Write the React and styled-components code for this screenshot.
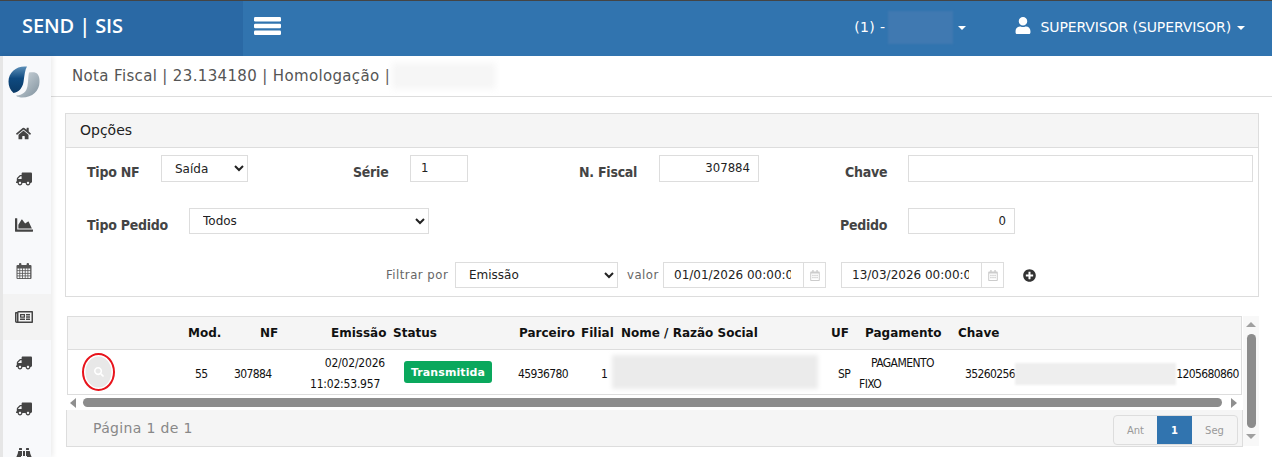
import React from "react";
import styled, { createGlobalStyle } from "styled-components";
import { FaHome, FaTruck, FaChartArea, FaRegNewspaper, FaBinoculars, FaUser, FaSearch, FaPlusCircle, FaRegCalendarAlt } from "react-icons/fa";

const Global = createGlobalStyle`
  html, body { margin: 0; padding: 0; background: #fff; height: 457px; overflow: hidden; }
  body { font-family: "DejaVu Sans", Verdana, sans-serif; color: #333; }
  * { box-sizing: border-box; }
`;

const Page = styled.div`width: 1272px; height: 457px; overflow: hidden; display: flex; flex-direction: column;`;
const Header = styled.header`
  height: 56px; flex: none; display: flex; background: #3174af; border-top: 1px solid #444;
`;
const Brand = styled.div`
  width: 243px; background: #2a69a5; color: #fff; padding-left: 22px; display: flex; align-items: center;
  padding-bottom: 7px; font: 600 20px "Open Sans", sans-serif; letter-spacing: -0.1px; white-space: pre;
`;
const Burger = styled.div`
  margin-left: 11px; width: 27px; color: #fff; display: flex; align-items: center; padding-bottom: 6px;
  svg { display: block; }
`;
const TopRight = styled.div`
  margin-left: auto; display: flex; align-items: center; color: #fff; font-size: 14px; padding-bottom: 3px;
`;
const Blurred = styled.div`
  width: ${p => p.$w}px; height: ${p => p.$h}px; background: ${p => p.$c}; filter: blur(${p => p.$b ?? 3}px); flex: none;
  margin-left: ${p => p.$ml ?? 0}px;
`;
const Caret = styled.span`
  display: inline-block; border-left: 4px solid transparent; border-right: 4px solid transparent; border-top: 4px solid #fff;
  margin: 2px ${p => p.$mr}px 0 ${p => p.$ml}px;
`;
const TopText = styled.span`margin-left: ${p => p.$ml}px; white-space: nowrap; letter-spacing: ${p => p.$ls ?? 0}px;`;
const UserIcon = styled(FaUser)`width: 16px; height: 17px; margin-top: -3px;`;

const Body = styled.div`flex: 1; display: flex; min-height: 0;`;
const Sidebar = styled.nav`
  width: 51px; flex: none; background: #f8f9fb; border-left: 3px solid #e6e6e6;
  box-shadow: 2px 0 5px rgba(0,0,0,.08); z-index: 1; overflow: hidden;
`;
const LogoBox = styled.div`height: 54px; padding: 10px 0 0 5px; svg { display: block; }`;
const NavItem = styled.div`
  height: 46px; display: flex; align-items: center; justify-content: center; color: #444;
  background: ${p => (p.$active ? "#f3f3f3" : "transparent")}; padding-right: 7px; flex: none;
  svg { width: ${p => p.$s ?? 16}px; height: ${p => p.$s ?? 16}px; }
`;
const FlipTruck = styled(FaTruck)`transform: scaleX(-1);`;

const Main = styled.main`flex: 1; min-width: 0;`;
const TitleBar = styled.div`
  height: 41px; border-bottom: 1px solid #ddd; padding-left: 21px; display: flex; align-items: center;
  font-size: 15px; color: #555; letter-spacing: .35px; white-space: nowrap;
`;
const Panel = styled.section`
  margin: 16px 13px 0 14px; height: 184px; border: 1px solid #ddd; display: flex; flex-direction: column;
`;
const PanelHead = styled.div`
  height: 34px; flex: none; background: #f5f5f5; border-bottom: 1px solid #ddd; padding: 0 0 2px 14px;
  display: flex; align-items: center; font-size: 14px; color: #222;
`;
const FormRow = styled.div`
  display: flex; align-items: flex-start; margin-top: ${p => p.$mt}px; padding-left: ${p => p.$pl}px; flex: none;
`;
const FieldLabel = styled.label`
  width: ${p => p.$w}px; padding-left: ${p => p.$pl ?? 0}px; flex: none; font: bold 14px "DejaVu Sans Condensed", "DejaVu Sans", sans-serif; font-stretch: condensed;
  color: #444; padding-top: 9px; white-space: nowrap; letter-spacing: -.25px;
`;
const Select = styled.select`
  width: ${p => p.$w}px; height: ${p => p.$h}px; flex: none; border: 1px solid #ddd; background: #fff; border-radius: 0;
  font: 12px "DejaVu Sans", sans-serif; color: #222; padding: 0 0 0 9px; margin: 0; outline: none;
`;
const TextInput = styled.input`
  width: ${p => p.$w}px; height: ${p => p.$h}px; flex: none; border: 1px solid #ddd; background: #fff; border-radius: 0;
  font: 13px "DejaVu Sans Condensed", "DejaVu Sans", sans-serif; font-stretch: condensed; color: #222;
  padding: 0 8px 2px 10px; margin: 0; text-align: ${p => p.$align || "left"}; outline: none;
`;
const FilterLabel = styled.span`
  width: ${p => p.$w}px; padding-left: ${p => p.$pl ?? 0}px; flex: none; font: 13px "DejaVu Sans Condensed", "DejaVu Sans", sans-serif; font-stretch: condensed; color: #666;
  padding-top: 5px; letter-spacing: .5px; white-space: nowrap;
`;
const DateGroup = styled.div`
  width: 163px; height: 26px; flex: none; display: flex; border: 1px solid #ddd; margin-right: 15px;
`;
const DateInput = styled.input`
  width: 139px; border: 0; padding: 0 12px 0 10px; font: 12px "DejaVu Sans", sans-serif; color: #222; outline: none; background: #fff; margin: 0;
`;
const DateAddon = styled.div`
  flex: 1; border-left: 1px solid #ddd; display: flex; align-items: center; justify-content: center; color: #ccc;
  svg { width: 10px; height: 11px; }
`;
const AddBtn = styled.div`
  margin: 7px 0 0 4px; color: #333; svg { display: block; width: 13px; height: 13px; }
`;

const TableArea = styled.section`
  display: flex; margin: 19px 0 0 15px; width: 1193px; align-items: flex-start;
`;
const TableCol = styled.div`width: 1177px; flex: none;`;
const TableBox = styled.div`
  margin-left: 1px; width: 1175px; border: 1px solid #ddd;
`;
const HeadRow = styled.div`
  height: 33px; background: #f5f5f5; border-bottom: 1px solid #ddd; display: flex; align-items: center; padding-left: 120px;
  font: bold 12px "DejaVu Sans", sans-serif; color: #111; white-space: nowrap;
`;
const DataRow = styled.div`
  height: 44px; display: flex; align-items: center; padding-left: 14px;
  font: 12px "DejaVu Sans Condensed", "DejaVu Sans", sans-serif; font-stretch: condensed; color: #111; white-space: nowrap; letter-spacing: -.6px;
`;
const Cell = styled.div`width: ${p => p.$w}px; flex: none; display: flex; align-items: center;`;
const TextCell = styled(Cell)`padding-top: 3px;`;
const MultiLine = styled.div`
  width: ${p => p.$w}px; margin-right: ${p => p.$mr}px; flex: none; line-height: 21px; margin-top: 4px; letter-spacing: ${p => p.$ls}px;
`;
const LineEnd = styled.div`text-align: right;`;
const SearchRing = styled.div`
  width: 33px; height: 38px; border: 2px solid #e8141c; border-radius: 50%; background: #e8e8e8;
  display: flex; align-items: center; justify-content: center; color: #fff; box-shadow: inset 0 0 0 1.5px #fff;
  svg { width: 10px; height: 10px; }
`;
const Badge = styled.span`
  width: 88px; height: 22px; background: #0aa85d; color: #fff; border-radius: 3px; display: flex; align-items: center; justify-content: center;
  font: bold 11px "DejaVu Sans", sans-serif; letter-spacing: .1px;
`;
const HScroll = styled.div`
  height: 15px; margin-left: 1px; width: 1176px; display: flex; align-items: center; padding-left: 3px;
`;
const Arrow = styled.span`
  flex: none; width: 0; height: 0; display: block;
  ${p => p.$dir === "left" && "border-top: 5px solid transparent; border-bottom: 5px solid transparent; border-right: 6px solid #8f8f8f;"}
  ${p => p.$dir === "right" && "border-top: 5px solid transparent; border-bottom: 5px solid transparent; border-left: 6px solid #8f8f8f;"}
  ${p => p.$dir === "up" && "border-left: 5px solid transparent; border-right: 5px solid transparent; border-bottom: 5px solid #a0a0a0;"}
  ${p => p.$dir === "down" && "border-left: 5px solid transparent; border-right: 5px solid transparent; border-top: 5px solid #a0a0a0;"}
`;
const HThumb = styled.div`width: 1139px; height: 9px; margin: 0 9px 0 7px; border-radius: 5px; background: #8c8c8c; flex: none;`;
const Pager = styled.div`
  height: 37px; background: #f5f5f5; border: 1px solid #ddd; border-top: 0; display: flex; align-items: flex-start; justify-content: space-between;
  padding: 5px 4px 0 26px; font-size: 14px; color: #888; letter-spacing: .35px;
`;
const PagerText = styled.span`padding-top: 5px;`;
const PageGroup = styled.div`
  display: flex; height: 30px; border: 1px solid #ddd; border-radius: 4px; overflow: hidden; letter-spacing: 0;
`;
const PageBtn = styled.div`
  width: ${p => p.$w}px; display: flex; align-items: center; justify-content: center; font-size: 10px; font-weight: ${p => (p.$on ? "bold" : "normal")};
  background: ${p => (p.$on ? "#3174af" : "transparent")}; color: ${p => (p.$on ? "#fff" : "#999")};
`;
const VScroll = styled.div`
  width: 16px; height: 130px; background: #f8f8f8; display: flex; flex-direction: column; align-items: center; flex: none; padding-top: 6px;
`;
const VThumb = styled.div`width: 9px; height: 94px; border-radius: 5px; background: #8c8c8c; margin: 7px 0 6px; flex: none;`;

const Logo = () => (
  <svg width="32" height="32" viewBox="0 0 32 32">
    <defs>
      <linearGradient id="lb" x1="0" y1="0" x2="0" y2="1">
        <stop offset="0" stopColor="#5c8fb8" /><stop offset=".45" stopColor="#0f4a80" /><stop offset="1" stopColor="#0b3a66" />
      </linearGradient>
      <linearGradient id="lg" x1="0" y1="0" x2="1" y2="1">
        <stop offset="0" stopColor="#d6dde2" /><stop offset="1" stopColor="#7f919d" />
      </linearGradient>
    </defs>
    <path d="M19 0.6C9 -0.6 0.5 6 0.5 15.5C0.5 20 2 24 5.5 27C11 26 14.5 22 15.5 16C16.5 9 17 4 19 0.6Z" fill="url(#lb)" />
    <path d="M21 6.5C25.5 5.8 28 6.2 29.5 8C31.5 11 31.5 13 31.5 16C31.5 25 24 32 13 31.5C9.5 31 9 30.5 8 29.5C15 29 18.5 26 19.5 20C20.5 14 20 10 21 6.5Z" fill="url(#lg)" />
  </svg>
);

const BarsIcon = () => (
  <svg width="27" height="18" viewBox="0 0 27 18" fill="currentColor">
    <rect x="0" y="0" width="27" height="4.4" rx="1.2" />
    <rect x="0" y="6.8" width="27" height="4.4" rx="1.2" />
    <rect x="0" y="13.6" width="27" height="4.4" rx="1.2" />
  </svg>
);

const CalendarGrid = () => {
  const cells = [];
  for (let r = 0; r < 4; r++) for (let c = 0; c < 5; c++) cells.push(<rect key={`${r}-${c}`} x={1.5 + c * 2.7} y={5.5 + r * 2.6} width="1.9" height="1.8" fill="#f8f9fb" />);
  return (
    <svg viewBox="0 0 16 16" fill="#555">
      <rect x="0.5" y="2" width="15" height="14" rx="1" />
      <rect x="3" y="0" width="2.4" height="4" rx="1" />
      <rect x="10.6" y="0" width="2.4" height="4" rx="1" />
      {cells}
    </svg>
  );
};

export default function App() {
  return (
    <Page>
      <Global />
      <Header>
        <Brand>SEND | SIS</Brand>
        <Burger><BarsIcon /></Burger>
        <TopRight>
          <TopText $ml={0} $ls={0.4}>(1) -</TopText>
          <Blurred $w={65} $h={33} $c="#4079b1" $b={1} $ml={3} />
          <Caret $ml={5} $mr={49} />
          <UserIcon />
          <TopText $ml={9} $ls={-0.1}>SUPERVISOR (SUPERVISOR)</TopText>
          <Caret $ml={6} $mr={27} />
        </TopRight>
      </Header>
      <Body>
        <Sidebar>
          <LogoBox><Logo /></LogoBox>
          <NavItem $s={15}><FaHome /></NavItem>
          <NavItem><FlipTruck /></NavItem>
          <NavItem $s={18}><FaChartArea /></NavItem>
          <NavItem><CalendarGrid /></NavItem>
          <NavItem $active $s={18}><FaRegNewspaper /></NavItem>
          <NavItem><FlipTruck /></NavItem>
          <NavItem><FlipTruck /></NavItem>
          <NavItem><FaBinoculars /></NavItem>
        </Sidebar>
        <Main>
          <TitleBar>
            Nota Fiscal | 23.134180 | Homologação |
            <Blurred $w={104} $h={26} $c="#f6f6f6" $b={3} $ml={2} />
          </TitleBar>
          <Panel>
            <PanelHead>Opções</PanelHead>
            <FormRow $mt={7} $pl={21}>
              <FieldLabel $w={74}>Tipo NF</FieldLabel>
              <Select $w={87} $h={27} defaultValue="s"><option value="s">Saída</option></Select>
              <FieldLabel $w={162} $pl={105}>Série</FieldLabel>
              <TextInput $w={58} $h={27} defaultValue="1" />
              <FieldLabel $w={191} $pl={111}>N. Fiscal</FieldLabel>
              <TextInput $w={100} $h={27} defaultValue="307884" $align="right" />
              <FieldLabel $w={149} $pl={86}>Chave</FieldLabel>
              <TextInput $w={345} $h={27} />
            </FormRow>
            <FormRow $mt={26} $pl={21}>
              <FieldLabel $w={102}>Tipo Pedido</FieldLabel>
              <Select $w={240} $h={26} defaultValue="t"><option value="t">Todos</option></Select>
              <FieldLabel $w={479} $pl={411}>Pedido</FieldLabel>
              <TextInput $w={107} $h={26} defaultValue="0" $align="right" />
            </FormRow>
            <FormRow $mt={28} $pl={320}>
              <FilterLabel $w={69}>Filtrar por</FilterLabel>
              <Select $w={163} $h={26} defaultValue="e"><option value="e">Emissão</option></Select>
              <FilterLabel $w={45} $pl={9}>valor</FilterLabel>
              <DateGroup>
                <DateInput defaultValue="01/01/2026 00:00:00" />
                <DateAddon><FaRegCalendarAlt /></DateAddon>
              </DateGroup>
              <DateGroup>
                <DateInput defaultValue="13/03/2026 00:00:00" />
                <DateAddon><FaRegCalendarAlt /></DateAddon>
              </DateGroup>
              <AddBtn><FaPlusCircle /></AddBtn>
            </FormRow>
          </Panel>
          <TableArea>
            <TableCol>
              <TableBox>
                <HeadRow>
                  <Cell $w={72}>Mod.</Cell>
                  <Cell $w={71}>NF</Cell>
                  <Cell $w={62}>Emissão</Cell>
                  <Cell $w={126}>Status</Cell>
                  <Cell $w={62}>Parceiro</Cell>
                  <Cell $w={40}>Filial</Cell>
                  <Cell $w={210}>Nome / Razão Social</Cell>
                  <Cell $w={34}>UF</Cell>
                  <Cell $w={93}>Pagamento</Cell>
                  <Cell $w={80}>Chave</Cell>
                </HeadRow>
                <DataRow>
                  <Cell $w={113}><SearchRing><FaSearch /></SearchRing></Cell>
                  <TextCell $w={39}>55</TextCell>
                  <TextCell $w={76}>307884</TextCell>
                  <MultiLine $w={75} $mr={19} $ls={-0.2}><LineEnd>02/02/2026</LineEnd>11:02:53.957</MultiLine>
                  <Cell $w={114}><Badge>Transmitida</Badge></Cell>
                  <TextCell $w={83}>45936780</TextCell>
                  <TextCell $w={11}>1</TextCell>
                  <Cell $w={226}><Blurred $w={206} $h={34} $c="#ebebeb" $b={2} /></Cell>
                  <TextCell $w={21}>SP</TextCell>
                  <MultiLine $w={75} $mr={31} $ls={-0.55}><LineEnd>PAGAMENTO</LineEnd>FIXO</MultiLine>
                  <TextCell $w={250}>
                    35260256
                    <Blurred $w={161} $h={22} $c="#eeeeee" $b={1} />
                    1205680860
                  </TextCell>
                </DataRow>
              </TableBox>
              <HScroll>
                <Arrow $dir="left" />
                <HThumb />
                <Arrow $dir="right" />
              </HScroll>
              <Pager>
                <PagerText>Página 1 de 1</PagerText>
                <PageGroup>
                  <PageBtn $w={43}>Ant</PageBtn>
                  <PageBtn $w={35} $on>1</PageBtn>
                  <PageBtn $w={45}>Seg</PageBtn>
                </PageGroup>
              </Pager>
            </TableCol>
            <VScroll>
              <Arrow $dir="up" />
              <VThumb />
              <Arrow $dir="down" />
            </VScroll>
          </TableArea>
        </Main>
      </Body>
    </Page>
  );
}
